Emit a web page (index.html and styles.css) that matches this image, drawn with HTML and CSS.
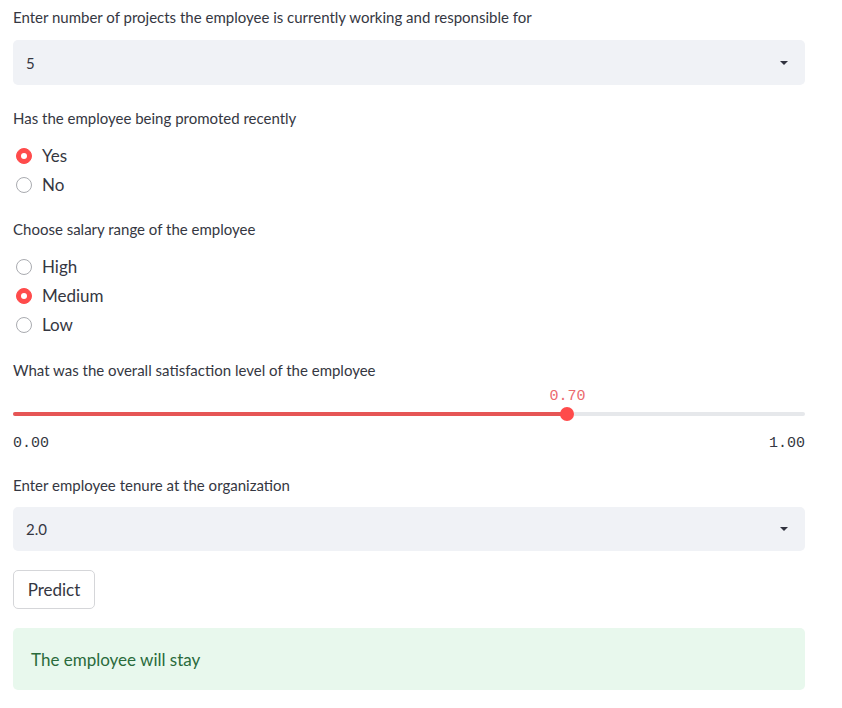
FILE: index.html
```html
<!DOCTYPE html>
<html>
<head>
<meta charset="utf-8">
<link rel="stylesheet" href="styles.css">
</head>
<body>
<div class="page">
  <div class="label l1">Enter number of projects the employee is currently working and responsible for</div>
  <div class="select s1">
    <span class="select-value">5</span>
    <svg class="chev" width="10" height="6" viewBox="0 0 10 6"><path d="M1 1 L9 1 L5 5 Z" fill="#31333f"/></svg>
  </div>

  <div class="label l2">Has the employee being promoted recently</div>
  <div class="radios r1">
    <div class="radio checked"><span class="dot"></span><span class="rtext">Yes</span></div>
    <div class="radio"><span class="dot"></span><span class="rtext">No</span></div>
  </div>

  <div class="label l3">Choose salary range of the employee</div>
  <div class="radios r2">
    <div class="radio"><span class="dot"></span><span class="rtext">High</span></div>
    <div class="radio checked"><span class="dot"></span><span class="rtext">Medium</span></div>
    <div class="radio"><span class="dot"></span><span class="rtext">Low</span></div>
  </div>

  <div class="label l4">What was the overall satisfaction level of the employee</div>
  <div class="slider">
    <div class="slider-value-row"><span class="slider-value" style="left:70%">0.70</span></div>
    <div class="track">
      <div class="track-fill" style="width:70%"></div>
      <div class="thumb" style="left:70%"></div>
    </div>
    <div class="ticks"><span>0.00</span><span>1.00</span></div>
  </div>

  <div class="label l5">Enter employee tenure at the organization</div>
  <div class="select s2">
    <span class="select-value">2.0</span>
    <svg class="chev" width="10" height="6" viewBox="0 0 10 6"><path d="M1 1 L9 1 L5 5 Z" fill="#31333f"/></svg>
  </div>

  <button class="btn">Predict</button>

  <div class="success">The employee will stay</div>
</div>
</body>
</html>
```
FILE: styles.css
```css
html, body {
  margin: 0;
  padding: 0;
  background: #ffffff;
}
body {
  font-family: "Lato", "Noto Sans", sans-serif;
  color: #353742;
}
.page {
  width: 792px;
  padding: 7px 0 0 13px;
}
.label {
  font-size: 15px;
  line-height: 20px;
  height: 20px;
  color: #353742;
}
.l1 { margin-bottom: 13px; }
.l2 { margin-top: 23px; margin-bottom: 13px; }
.l3 { margin-top: 20px; margin-bottom: 13px; }
.l4 { margin-top: 21px; margin-bottom: 9px; }
.l5 { margin-top: 23px; margin-bottom: 12px; }

.select {
  background: #f0f2f6;
  border-radius: 5px;
  display: flex;
  align-items: center;
  justify-content: space-between;
  padding: 0 16px 0 13px;
  box-sizing: border-box;
}
.s1 { height: 45px; }
.s2 { height: 44px; }
.select-value {
  font-size: 15px;
  color: #353742;
}
.chev { display: block; }

.radios {
  display: flex;
  flex-direction: column;
}
.radio {
  height: 29px;
  display: flex;
  align-items: center;
  font-size: 17px;
}
.dot {
  width: 16px;
  height: 16px;
  box-sizing: border-box;
  border: 1.5px solid #a9abb0;
  border-radius: 50%;
  margin-left: 3px;
  margin-right: 10px;
  display: flex;
  align-items: center;
  justify-content: center;
  background: #fff;
}
.radio.checked .dot {
  background: #ff4b4b;
  border-color: #ff4b4b;
}
.radio.checked .dot::after {
  content: "";
  width: 6px;
  height: 6px;
  border-radius: 50%;
  background: #fff;
}
.rtext { color: #353742; }

.slider {
  width: 792px;
}
.slider-value-row {
  position: relative;
  height: 16px;
}
.slider-value {
  position: absolute;
  top: 0;
  transform: translateX(-50%);
  font-family: "Liberation Mono", "DejaVu Sans Mono", monospace;
  font-size: 15px;
  line-height: 16px;
  color: #eb6a6e;
}
.track {
  position: relative;
  height: 4px;
  margin-top: 7px;
  background: #e6e8eb;
  border-radius: 2px;
}
.track-fill {
  height: 4px;
  background: #e65555;
  border-radius: 2px;
}
.thumb {
  position: absolute;
  top: -5px;
  width: 14px;
  height: 14px;
  margin-left: -7px;
  border-radius: 50%;
  background: #ff4b4b;
}
.ticks {
  display: flex;
  justify-content: space-between;
  margin-top: 20px;
  font-family: "Liberation Mono", "DejaVu Sans Mono", monospace;
  font-size: 15px;
  line-height: 16px;
  color: #353742;
}

.btn {
  display: block;
  margin-top: 19px;
  height: 39px;
  width: 82px;
  padding: 0;
  background: #fff;
  border: 1px solid #d5d6d9;
  border-radius: 5px;
  font-family: inherit;
  font-size: 17px;
  color: #353742;
}

.success {
  margin-top: 19px;
  height: 62px;
  box-sizing: border-box;
  padding: 0 18px;
  display: flex;
  align-items: center;
  background: #e8f8ed;
  border-radius: 5px;
  font-size: 17px;
  color: #2a6b3c;
}
```
